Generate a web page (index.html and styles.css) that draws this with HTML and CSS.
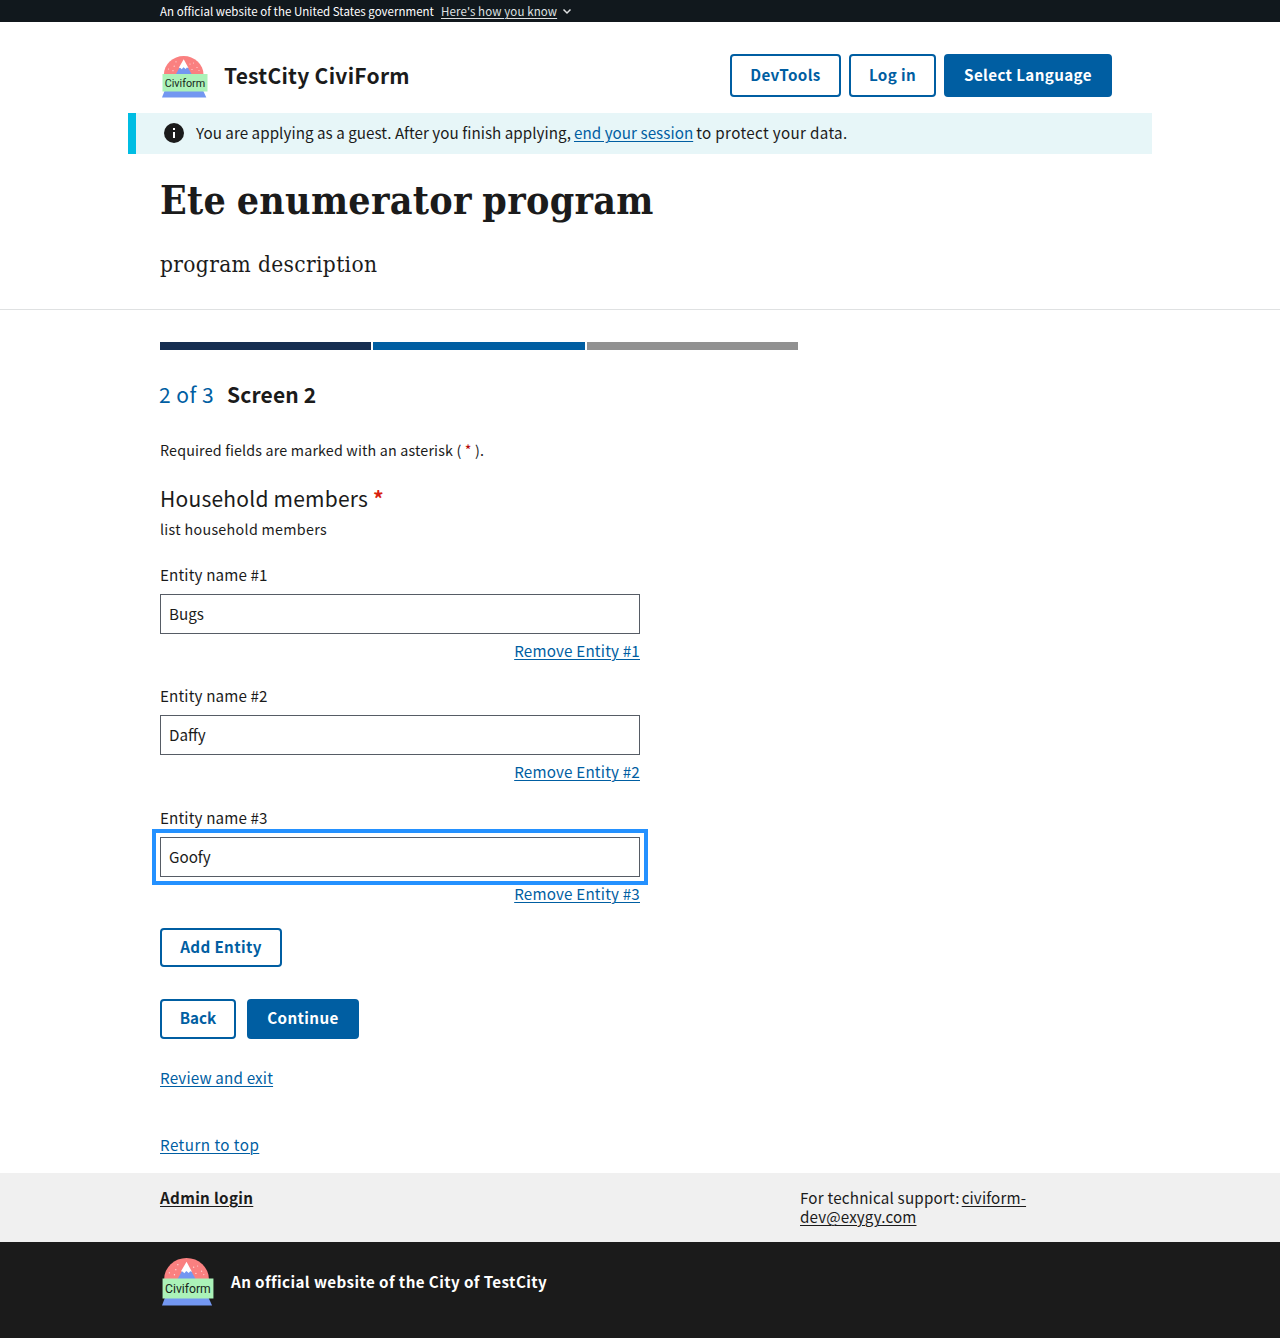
FILE: index.html
```html
<!DOCTYPE html>
<html lang="en">
<head>
<meta charset="utf-8">
<title>Ete enumerator program</title>
<link rel="stylesheet" href="styles.css">
</head>
<body>
<div class="banner"><div class="container banner-row">
  <span class="banner-text">An official website of the United States government</span>
  <a class="banner-link">Here's how you know</a>
  <svg width="10" height="8" viewBox="0 0 10 8"><path d="m1.500 2.500 3.500 3.500L8.500 2.500" fill="none" stroke="#dfe1e2" stroke-width="1.500"/></svg>
</div></div>

<header class="container header">
  <svg class="logo" width="46" height="42" viewBox="0 0 46 42">
    <path d="M1.900 18.500a19.800 18.500 0 0 1 39.600 0z" fill="#fa8080"/>
    <path d="M13.700 18.500 21.700 4.200l8.100 14.300z" fill="#7397f1"/>
    <path d="m21.700 3.300-4.900 8.400 1.700.3 1.200 1.300 1.800-2 2.200 1.800 1.200-1.600 1.600.6z" fill="#fff"/>
    <g fill="#fff" opacity=".75"><circle cx="14" cy="5.800" r=".6"/><circle cx="12.200" cy="10.200" r=".6"/><circle cx="6.500" cy="13" r=".6"/><circle cx="11" cy="14.700" r=".6"/><circle cx="28" cy="8" r=".6"/><circle cx="31.500" cy="7" r=".5"/><circle cx="35" cy="11.500" r=".6"/><circle cx="30" cy="13.500" r=".6"/><circle cx="37" cy="14.500" r=".5"/></g>
    <path d="M2.500 35h38.800l3 6.500H0z" fill="#7397f1"/>
    <path d="M.5 18h45v17.500H.5z" fill="#abf2b8"/>
    <text x="2.700" y="31" font-size="10.800" textLength="40.500" class="logo-text">Civiform</text>
  </svg>
  <span class="site-title">TestCity CiviForm</span>
  <nav class="nav">
    <button class="btn outline dev">DevTools</button>
    <button class="btn outline login">Log in</button>
    <button class="btn lang">Select Language</button>
  </nav>
</header>

<div class="alert">
  <svg width="20" height="20" viewBox="0 0 20 20"><circle cx="10" cy="10" r="10" fill="#1b1b1b"/><path d="M9 5h2v2H9zM9 9h2v6H9z" fill="#fff"/></svg>
  <p><span class="guest">You are applying as a guest. After you finish applying,</span><a class="session">end your session</a><span class="protect">to protect your data.</span></p>
</div>

<section class="intro"><div class="container">
  <h1>Ete enumerator program</h1>
  <p class="description">program description</p>
</div></section>

<main class="container">
  <div class="steps"><i class="done"></i><i class="current"></i><i></i></div>
  <h2><span class="count">2 of 3</span><span class="screen">Screen 2</span></h2>
  <p class="required">Required fields are marked with an asterisk ( <span class="star">*</span> ).</p>
  <h3>Household members <b>*</b></h3>
  <p class="help">list household members</p>

  <div class="entity first">
    <label for="e1">Entity name #1</label>
    <input id="e1" value="Bugs">
    <a>Remove Entity #1</a>
  </div>
  <div class="entity">
    <label for="e2">Entity name #2</label>
    <input id="e2" value="Daffy">
    <a>Remove Entity #2</a>
  </div>
  <div class="entity focused">
    <label for="e3">Entity name #3</label>
    <input id="e3" value="Goofy">
    <a>Remove Entity #3</a>
  </div>

  <button class="btn outline add">Add Entity</button>
  <div class="actions">
    <button class="btn outline back">Back</button>
    <button class="btn continue">Continue</button>
  </div>
  <a class="review">Review and exit</a>
  <a class="top">Return to top</a>
</main>

<footer>
  <div class="support"><div class="container support-row">
    <a class="admin">Admin login</a>
    <p class="contact"><span>For technical support:</span><a>civiform-<br>dev@exygy.com</a></p>
  </div></div>
  <div class="identity"><div class="container identity-row">
    <svg width="52" height="48" viewBox="0 0 46 42" preserveAspectRatio="none">
      <path d="M1.900 18.500a19.800 18.500 0 0 1 39.600 0z" fill="#fa8080"/>
      <path d="M13.700 18.500 21.700 4.200l8.100 14.300z" fill="#7397f1"/>
      <path d="m21.700 3.300-4.900 8.400 1.700.3 1.200 1.300 1.800-2 2.200 1.800 1.200-1.600 1.600.6z" fill="#fff"/>
      <g fill="#fff" opacity=".75"><circle cx="14" cy="5.800" r=".6"/><circle cx="12.200" cy="10.200" r=".6"/><circle cx="6.500" cy="13" r=".6"/><circle cx="11" cy="14.700" r=".6"/><circle cx="28" cy="8" r=".6"/><circle cx="31.500" cy="7" r=".5"/><circle cx="35" cy="11.500" r=".6"/><circle cx="30" cy="13.500" r=".6"/><circle cx="37" cy="14.500" r=".5"/></g>
      <path d="M2.500 35h38.800l3 6.500H0z" fill="#7397f1"/>
      <path d="M.5 18h45v17.500H.5z" fill="#abf2b8"/>
      <text x="2.700" y="31" font-size="10.800" textLength="40.500" class="logo-text">Civiform</text>
    </svg>
    <strong>An official website of the City of TestCity</strong>
  </div></div>
</footer>
</body>
</html>
```
FILE: styles.css
```css
* { box-sizing: border-box; }
body { margin: 0; background: #fff; color: #1b1b1b; font: 15.2px/22px "Noto Sans CJK SC", "Noto Sans", sans-serif; }
h1, h2, h3, p { margin: 0; font-weight: 400; }
a { color: #005ea2; text-decoration: underline; text-underline-offset: 2px; text-decoration-thickness: 1px; white-space: nowrap; }
svg { display: block; flex: none; }
.logo-text { font-family: Roboto, sans-serif; fill: #17261b; }
.container { width: 960px; margin: 0 auto; }

.banner { height: 22px; background: #11181d; color: #fff; }
.banner-row { display: flex; align-items: center; height: 22px; font-size: 11.5px; white-space: nowrap; }
.banner-text { width: 281px; letter-spacing: .02px; }
.banner-link { width: 116px; margin-right: 5px; color: #dfe1e2; letter-spacing: .11px; }

.header { display: flex; align-items: center; height: 91px; padding: 16px 8px 1px 1.5px; }
.logo { margin-top: 3px; }
.site-title { margin-left: 16.5px; font-size: 21px; font-weight: 700; letter-spacing: .27px; }
.nav { display: flex; gap: 8px; margin-left: auto; }

.btn { height: 43px; padding: 0 0 3px; border: 2px solid #005ea2; border-radius: 4px; background: #005ea2; color: #fff; font: 700 15.2px/18px "Noto Sans CJK SC", "Noto Sans", sans-serif; letter-spacing: .37px; white-space: nowrap; }
.btn.outline { background: #fff; color: #005ea2; }
.dev { width: 111px; }
.login { width: 87px; }
.lang { width: 168px; }

.alert { display: flex; align-items: center; gap: 12px; width: 1024px; height: 41px; margin: 0 auto; padding: 0 0 1px 28px; border-left: 8px solid #00bde3; background: #e7f6f8; }
.alert p { margin-bottom: 2px; }
.guest { margin-right: 3px; letter-spacing: .04px; }
.session { margin-right: 3px; letter-spacing: .05px; }
.protect { letter-spacing: .34px; }

.intro { height: 156px; border-bottom: 1px solid #dfe1e2; padding-top: 22px; }
h1 { font: 700 39px/48px "DejaVu Serif Condensed", "DejaVu Serif", serif; letter-spacing: .3px; word-spacing: -2px; white-space: nowrap; }
.description { margin-top: 24px; font: 22.5px/32px "DejaVu Serif Condensed", "DejaVu Serif", serif; letter-spacing: .35px; }

main { height: 863px; padding-top: 32px; }
.steps { display: grid; grid-template-columns: 211px 212px 211px; gap: 2px; height: 8px; }
.steps i { background: #919191; }
.steps .done { background: #162e51; }
.steps .current { background: #005ea2; }
h2 { display: flex; height: 32px; margin-top: 28px; font-size: 21px; line-height: 32px; }
.count { width: 67px; margin-left: -1px; color: #005ea2; letter-spacing: .5px; white-space: nowrap; }
.screen { margin-left: 1px; font-weight: 700; letter-spacing: .15px; }
.required { margin-top: 29px; font-size: 14.3px; letter-spacing: .16px; }
.star { color: #b50909; }
h3 { margin-top: 21px; font-size: 21px; line-height: 32px; letter-spacing: .22px; }
h3 b { color: #d91f11; }
.help { margin-top: 4px; font-size: 14.3px; letter-spacing: .3px; }

.entity { display: flex; flex-direction: column; width: 480px; height: 122px; padding-top: 23.3px; letter-spacing: .14px; }
.entity.first { height: 121px; }
.entity input { height: 40px; margin-top: 8.7px; padding: 0 8px 1.4px; border: 1px solid #565c65; border-radius: 0; color: #1b1b1b; background: #fff; font: inherit; }
.entity a { align-self: flex-end; margin-top: 5.3px; letter-spacing: .19px; }
.focused input { outline: 4px solid #2491ff; outline-offset: 4px; }
.add { display: block; width: 122px; height: 39px; margin-top: 23px; }
.actions { display: flex; gap: 11px; margin-top: 32px; }
.actions .btn { height: 40px; padding-bottom: 4px; }
.actions .back { width: 76px; letter-spacing: 0; }
.continue { width: 112px; }
.review, .top { display: block; width: max-content; margin-top: 27px; letter-spacing: .17px; }
.top { margin-top: 45px; letter-spacing: .45px; }

.support { height: 69px; padding-top: 15px; background: #f0f0f0; }
.support-row { display: grid; grid-template-columns: 640px 320px; line-height: 19px; }
.support a { color: #1b1b1b; }
.admin { font-weight: 700; justify-self: start; letter-spacing: .33px; }
.contact { letter-spacing: .2px; }
.contact span { margin-right: 2px; }
.contact a { letter-spacing: .13px; }
.identity { height: 96px; padding-top: 16px; background: #1b1b1b; color: #fff; }
.identity-row { display: flex; align-items: center; gap: 17.5px; padding-left: 1.5px; }
.identity strong { margin-bottom: 2px; letter-spacing: .4px; }
```
